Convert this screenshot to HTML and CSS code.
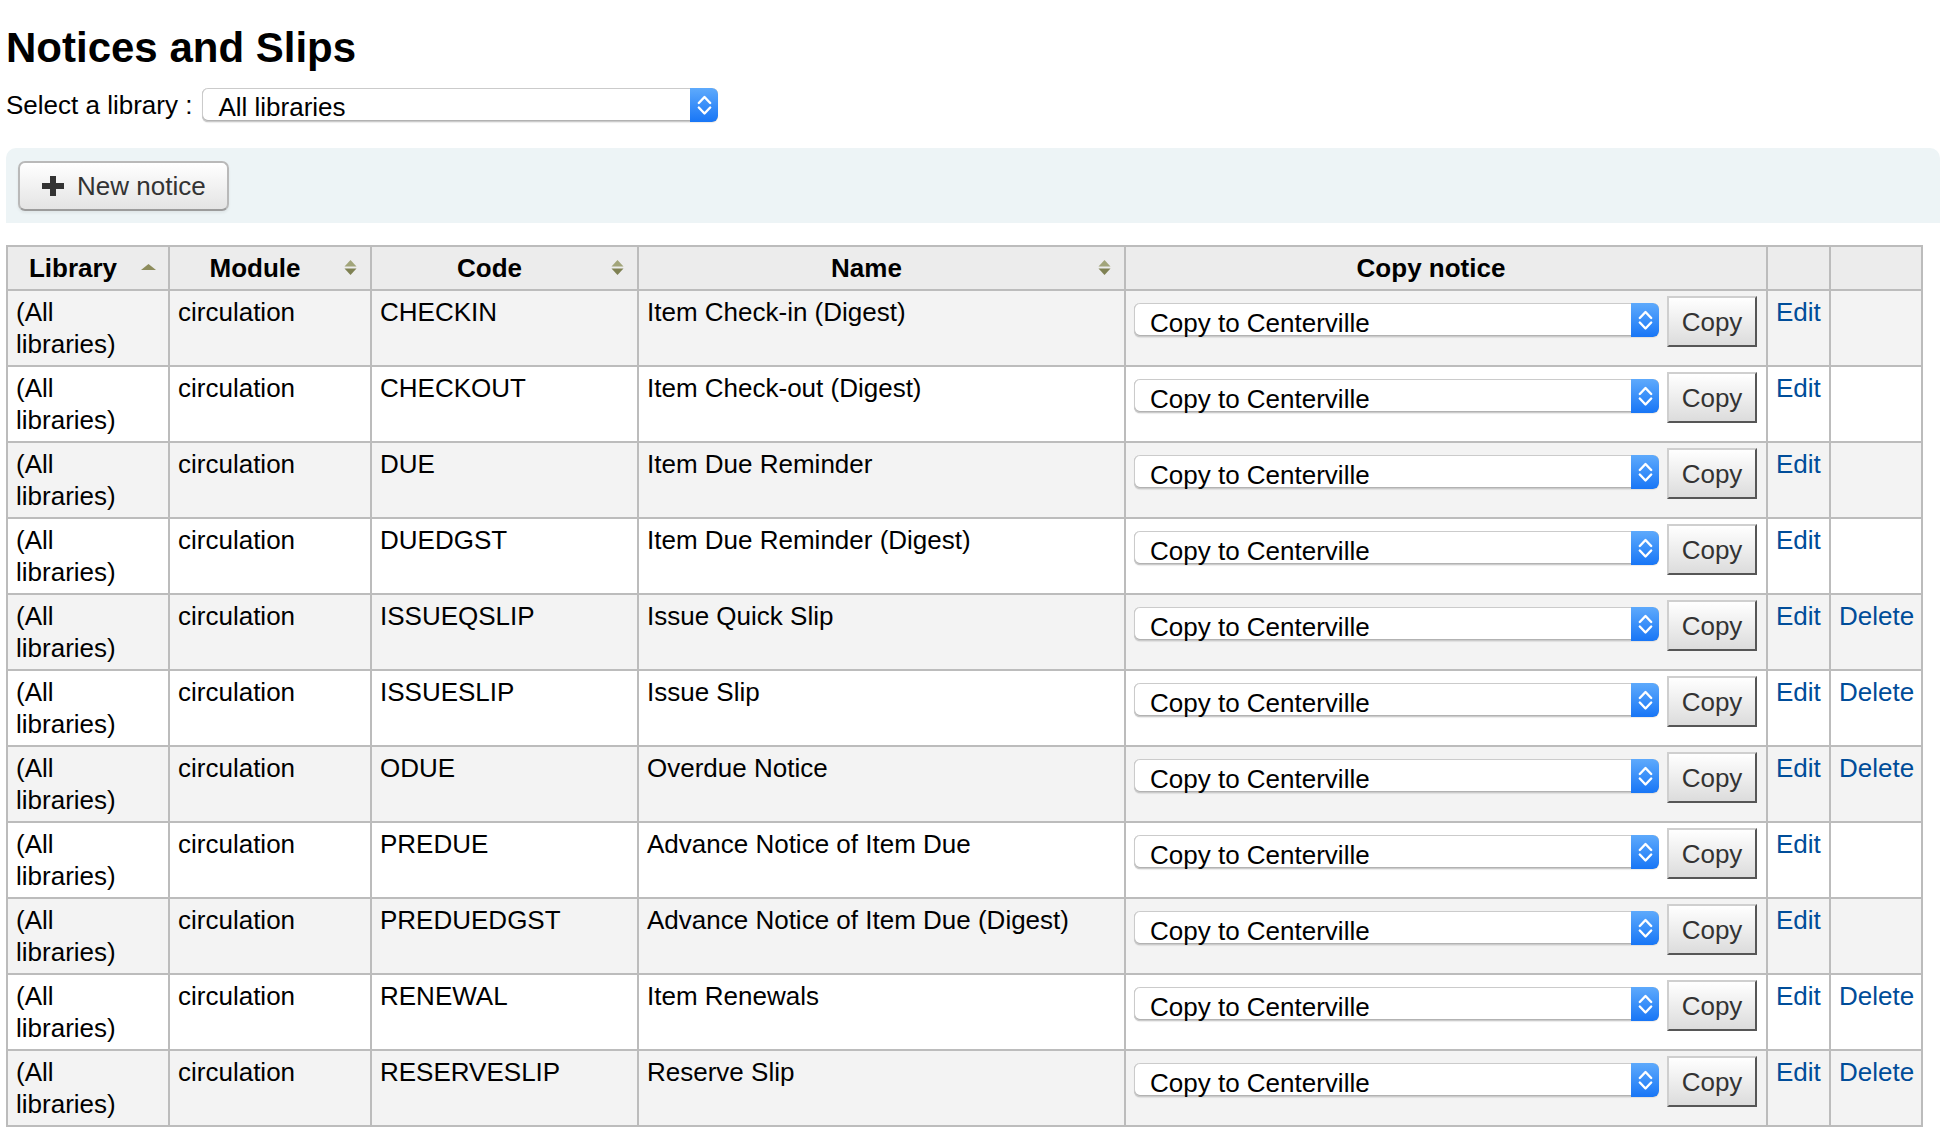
FILE: index.html
```html
<!DOCTYPE html>
<html lang="en">
<head>
<meta charset="utf-8">
<title>Notices and Slips</title>
<link rel="stylesheet" href="styles.css">
</head>
<body>
<div class="page">
  <h1 class="title">Notices and Slips</h1>

  <form class="libsel">
    <label class="libsel-label">Select a library :</label>
    <span class="sel sel-lib">
      <select class="sel-input"><option>All libraries</option></select>
      <span class="sel-arrow"><svg width="15" height="34" viewBox="0 0 15 34"><path d="M1.8 15 L7.5 9 L13.2 15 M1.8 19.5 L7.5 25.5 L13.2 19.5" fill="none" stroke="#fff" stroke-width="2.4" stroke-linecap="round" stroke-linejoin="round"/></svg></span>
    </span>
  </form>

  <div class="toolbar">
    <button class="btn" type="button"><svg class="btn-plus" width="22" height="20" viewBox="0 0 22 20"><rect x="0" y="7" width="22" height="6" fill="#333"/><rect x="8" y="0" width="6" height="20" fill="#333"/></svg>New notice</button>
  </div>

  <table class="notices">
    <colgroup>
      <col class="c-lib"><col class="c-mod"><col class="c-code"><col class="c-name"><col class="c-copy"><col class="c-edit"><col class="c-del">
    </colgroup>
    <thead>
      <tr>
        <th>Library<span class="sort"><svg width="15" height="17" viewBox="0 0 15 17"><polygon points="0,11 7.5,5 15,11" fill="#8d8c5c"/></svg></span></th>
        <th>Module<span class="sort"><svg width="15" height="17" viewBox="0 0 15 17"><polygon points="1.5,7.5 7.5,1 13.5,7.5" fill="#a2a57a"/><polygon points="1.5,9.5 7.5,16 13.5,9.5" fill="#7f8153"/></svg></span></th>
        <th>Code<span class="sort"><svg width="15" height="17" viewBox="0 0 15 17"><polygon points="1.5,7.5 7.5,1 13.5,7.5" fill="#a2a57a"/><polygon points="1.5,9.5 7.5,16 13.5,9.5" fill="#7f8153"/></svg></span></th>
        <th>Name<span class="sort"><svg width="15" height="17" viewBox="0 0 15 17"><polygon points="1.5,7.5 7.5,1 13.5,7.5" fill="#a2a57a"/><polygon points="1.5,9.5 7.5,16 13.5,9.5" fill="#7f8153"/></svg></span></th>
        <th>Copy notice</th>
        <th></th>
        <th></th>
      </tr>
    </thead>
    <tbody id="rows"></tbody>
  </table>
</div>
<script src="app.js"></script>
</body>
</html>
```

FILE: styles.css
```css
html, body {
  margin: 0;
  padding: 0;
  background: #fff;
}
body {
  font-family: "Liberation Sans", Arial, Helvetica, sans-serif;
  font-size: 26px;
  color: #000;
  overflow-x: hidden;
}
.page {
  padding: 0 0 0 6px;
}
.title {
  margin: 24px 0 0;
  font-size: 42px;
  line-height: 48px;
  font-weight: bold;
}
.libsel {
  display: flex;
  align-items: center;
  gap: 10px;
  margin: 16px 0 0;
  height: 34px;
}
.libsel-label {
  line-height: 32px;
}
.sel {
  display: inline-flex;
  height: 34px;
  border-radius: 6px;
  overflow: hidden;
  background: #fff;
  box-shadow: inset 0 0 0 1px #cbcbcb, inset 0 -1px 0 1px #b2b2b2, 0 1px 1px rgba(0,0,0,0.08);
  flex: none;
}
.sel-lib { width: 516px; }
.sel-copy { width: 525px; margin-top: 7px; }
.sel-input {
  appearance: none;
  -webkit-appearance: none;
  box-sizing: border-box;
  border: none;
  background: transparent;
  font: inherit;
  font-size: 26px;
  color: #000;
  padding: 4px 0 0 16px;
  margin: 0;
  flex: 1;
  min-width: 0;
  height: 34px;
  outline: none;
}
.sel-arrow {
  width: 28px;
  flex: none;
  display: flex;
  align-items: center;
  justify-content: center;
  background: linear-gradient(#5eaafc, #1876f6);
  border-radius: 0 6px 6px 0;
}
.toolbar {
  margin-top: 26px;
  padding: 13px 12px 12px;
  background: #edf4f6;
  border-radius: 10px 10px 0 0;
}
.btn {
  display: inline-flex;
  align-items: center;
  gap: 13px;
  height: 50px;
  padding: 0 21px 0 22px;
  font: inherit;
  font-size: 26px;
  line-height: 32px;
  color: #333;
  background: linear-gradient(#ffffff, #e4e4e4);
  border: 2px solid #b9b9b9;
  border-bottom-color: #9c9c9c;
  border-radius: 7px;
  box-shadow: inset 0 2px 0 rgba(255,255,255,0.3), 0 2px 3px rgba(0,0,0,0.06);
}
.btn-plus { flex: none; }

.notices {
  margin-top: 22px;
  width: 1917px;
  table-layout: fixed;
  border-collapse: collapse;
}
.c-lib { width: 162px; }
.c-mod { width: 202px; }
.c-code { width: 267px; }
.c-name { width: 487px; }
.c-copy { width: 642px; }
.c-edit { width: 63px; }
.c-del { width: 92px; }

.notices th,
.notices td {
  border: 2px solid #bcbcbc;
  line-height: 32px;
}
.notices th {
  position: relative;
  background: #ececec;
  font-weight: bold;
  text-align: center;
  padding: 5px 38px 5px 8px;
  height: 32px;
}
.sort {
  position: absolute;
  right: 12px;
  top: 50%;
  margin-top: -9px;
  width: 15px;
  height: 17px;
  display: block;
}
.sort svg { display: block; }
.notices td {
  vertical-align: top;
  padding: 5px 8px;
  background: #fff;
}
.notices tr.odd td { background: #f3f3f3; }
.notices td.lib { padding-right: 14px; }
.copyform {
  display: flex;
  align-items: flex-start;
  gap: 8px;
}
.copybtn {
  flex: none;
  width: 90px;
  height: 51px;
  padding: 2px 0 0;
  font: inherit;
  font-size: 26px;
  line-height: 31px;
  color: #333;
  background: linear-gradient(#ffffff, #dcdcdc);
  border: 2px solid;
  border-color: #cfcfcf #565656 #565656 #cfcfcf;
}
.link {
  color: #004d99;
  text-decoration: none;
}
```

FILE: app.js
```js
var rows = [
  ["CHECKIN", "Item Check-in (Digest)", false],
  ["CHECKOUT", "Item Check-out (Digest)", false],
  ["DUE", "Item Due Reminder", false],
  ["DUEDGST", "Item Due Reminder (Digest)", false],
  ["ISSUEQSLIP", "Issue Quick Slip", true],
  ["ISSUESLIP", "Issue Slip", true],
  ["ODUE", "Overdue Notice", true],
  ["PREDUE", "Advance Notice of Item Due", false],
  ["PREDUEDGST", "Advance Notice of Item Due (Digest)", false],
  ["RENEWAL", "Item Renewals", true],
  ["RESERVESLIP", "Reserve Slip", true]
];
var arrow = '<span class="sel-arrow"><svg width="15" height="34" viewBox="0 0 15 34"><path d="M1.8 15 L7.5 9 L13.2 15 M1.8 19.5 L7.5 25.5 L13.2 19.5" fill="none" stroke="#fff" stroke-width="2.4" stroke-linecap="round" stroke-linejoin="round"/></svg></span>';
var html = "";
rows.forEach(function (r, i) {
  html += '<tr class="' + (i % 2 === 0 ? "odd" : "even") + '">' +
    '<td class="lib">(All libraries)</td>' +
    '<td>circulation</td>' +
    '<td>' + r[0] + '</td>' +
    '<td>' + r[1] + '</td>' +
    '<td><div class="copyform"><span class="sel sel-copy"><select class="sel-input"><option>Copy to Centerville</option></select>' + arrow + '</span><button class="copybtn" type="button">Copy</button></div></td>' +
    '<td><a class="link" href="#">Edit</a></td>' +
    '<td>' + (r[2] ? '<a class="link" href="#">Delete</a>' : '') + '</td>' +
    '</tr>';
});
document.getElementById("rows").innerHTML = html;
```
